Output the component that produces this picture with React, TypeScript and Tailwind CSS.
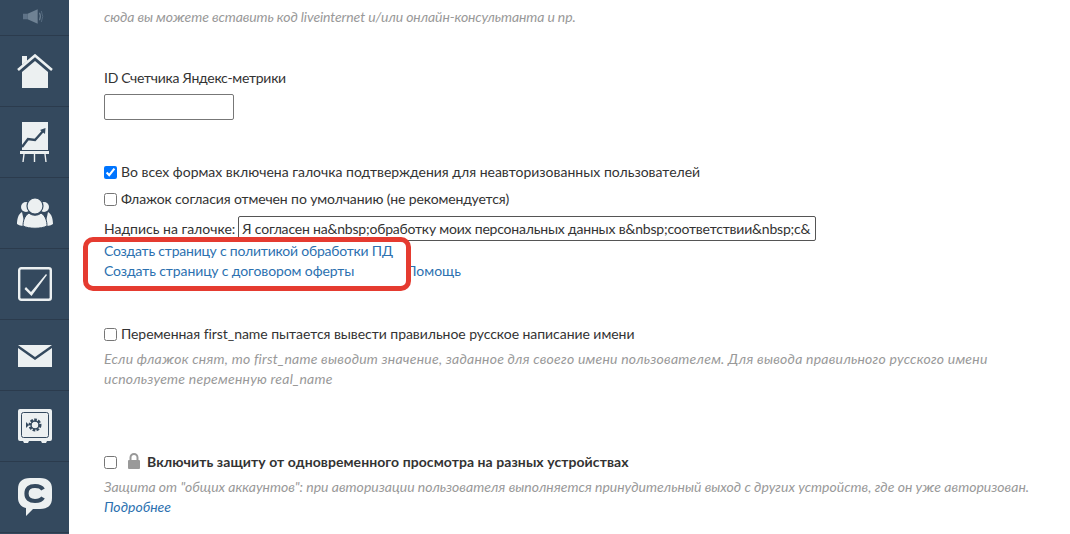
import React from 'react';

const link = 'text-[#2c71b0]';

const NavRow: React.FC<{ children: React.ReactNode; short?: boolean }> = ({ children, short }) => (
  <div className={`flex items-center justify-center border-b border-[#2b3b4d] ${short ? 'h-[36px]' : 'h-[71px]'}`}>
    {children}
  </div>
);

const Sidebar: React.FC = () => (
  <div className="w-[69px] shrink-0 h-[534px] overflow-hidden bg-[#34495e]">
    <NavRow short>
      <svg width="22" height="15" viewBox="0 0 24 16" className="mt-[-3px] ml-[-1px]">
        <rect x="0" y="5" width="5" height="6" fill="#5f7388" />
        <path d="M5 5 L16 0 V16 L5 11 Z" fill="#6f8294" />
        <path d="M18 4 Q20 8 18 12" stroke="#6f8294" strokeWidth="1.2" fill="none" />
        <path d="M20 2 Q23 8 20 14" stroke="#566b80" strokeWidth="1" fill="none" />
      </svg>
    </NavRow>
    <NavRow>
      <svg width="36" height="34" viewBox="0 0 36 34" className="mt-[-1px]">
        <path d="M5 2 H10 V7 L5 11 Z" fill="#ecf0f1" />
        <path d="M1 16 L18 1.5 L35 16" stroke="#ecf0f1" strokeWidth="2.6" fill="none" />
        <path d="M5 18 L18 7 L31 18 V34 H5 Z" fill="#ecf0f1" />
      </svg>
    </NavRow>
    <NavRow>
      <svg width="30" height="40" viewBox="0 0 30 40">
        <rect x="2" y="0" width="26" height="28" fill="#ecf0f1" />
        <path d="M2 25 L8 17 L15 18 L24 8" stroke="#34495e" strokeWidth="2.4" fill="none" />
        <path d="M20 8 L25.5 6 L25 12 Z" fill="#34495e" />
        <rect x="0" y="29" width="29" height="3" fill="#ecf0f1" />
        <path d="M4 32 L3 40 M14.5 32 V40 M25 32 L26 40" stroke="#ecf0f1" strokeWidth="1.4" />
      </svg>
    </NavRow>
    <NavRow>
      <svg width="36" height="31" viewBox="0 0 36 31">
        <circle cx="9" cy="9" r="5" fill="#ecf0f1" />
        <circle cx="27" cy="9" r="5" fill="#ecf0f1" />
        <path d="M5 14 C1 16 0 22 0 26 C3 28 6 28 8 28 Z M31 14 C35 16 36 22 36 26 C33 28 30 28 28 28 Z" fill="#ecf0f1" />
        <circle cx="18" cy="8" r="8" fill="#ecf0f1" stroke="#34495e" strokeWidth="1.2" />
        <path d="M12 15 C7 18 6 24 6 28 C12 31 24 31 30 28 C30 24 29 18 24 15 C21 18 15 18 12 15 Z" fill="#ecf0f1" stroke="#34495e" strokeWidth="1" />
      </svg>
    </NavRow>
    <NavRow>
      <svg width="34" height="34" viewBox="0 0 34 34">
        <rect x="1.2" y="1.2" width="31.6" height="31.6" rx="2" fill="none" stroke="#ecf0f1" strokeWidth="2.4" />
        <path d="M8 20 L13 25 L28 7 L29 8 L13.5 29 L6.5 22 Z" fill="#ecf0f1" />
      </svg>
    </NavRow>
    <NavRow>
      <svg width="34" height="22" viewBox="0 0 34 22" className="mt-[2px]">
        <path d="M0 0 H34 L17 12 Z" fill="#ecf0f1" />
        <path d="M0 3 L17 15 L34 3 V22 H0 Z" fill="#ecf0f1" />
      </svg>
    </NavRow>
    <NavRow>
      <svg width="34" height="34" viewBox="0 0 34 34">
        <path d="M2 0 H32 Q34 0 34 2 V30 Q34 32 32 32 H29 L28 34 H24 L23 32 H11 L10 34 H6 L5 32 H2 Q0 32 0 30 V2 Q0 0 2 0 Z" fill="#ecf0f1" />
        <rect x="3.5" y="3.5" width="27" height="25" rx="2" fill="none" stroke="#34495e" strokeWidth="1" />
        <circle cx="17" cy="16" r="5" fill="none" stroke="#34495e" strokeWidth="3" strokeDasharray="2.5 1.2" />
        <circle cx="17" cy="16" r="4" fill="none" stroke="#34495e" strokeWidth="1.4" />
        <path d="M8 13 L11 16 L8 19 Z" fill="#34495e" />
      </svg>
    </NavRow>
    <NavRow>
      <svg width="34" height="38" viewBox="0 0 34 38" className="mt-[-1px]">
        <path d="M12 0 H22 C30 0 34 4 34 11 V20 C34 27 30 31 22 31 H15 L8 38 L8 30 C3 29 0 25 0 20 V11 C0 4 4 0 12 0 Z" fill="#ecf0f1" />
        <path d="M25 11.5 C23.5 9 21 8 17 8 C11.5 8 8.5 10.5 8.5 15.5 C8.5 20.5 11.5 23 17 23 C21 23 23.5 22 25 19.5" fill="none" stroke="#34495e" strokeWidth="4.2" />
      </svg>
    </NavRow>
  </div>
);

const App: React.FC = () => {
  return (
    <div className="relative flex h-[534px] w-[1070px] overflow-hidden bg-white font-['Lato','Liberation_Sans',sans-serif] text-[14px] text-[#333]">
      <Sidebar />

      <div className="pl-[35px] pt-[7px] leading-[20px] flex-1">
        <p className="italic tracking-[-0.11px] text-[#999]">сюда вы можете вставить код liveinternet и/или онлайн-консультанта и пр.</p>

        <p className="mt-[41px] tracking-[-0.27px]">ID Счетчика Яндекс-метрики</p>
        <input type="text" className="mt-[6px] block h-[26px] w-[130px] rounded-[2px] border border-[#777] bg-white" />

        <label className="mt-[42px] flex items-center gap-[4px]">
          <input type="checkbox" defaultChecked className="m-0 h-[13px] w-[13px] accent-[#0075ff]" />
          <span>Во всех формах включена галочка подтверждения для неавторизованных пользователей</span>
        </label>
        <label className="mt-[7px] flex items-center gap-[4px]">
          <input type="checkbox" className="m-0 h-[13px] w-[13px]" />
          <span className="tracking-[-0.11px]">Флажок согласия отмечен по умолчанию (не рекомендуется)</span>
        </label>
        <div className="mt-[7px] flex items-center gap-[3px]">
          <span>Надпись на галочке:</span>
          <input
            type="text"
            readOnly
            value={'Я согласен на&nbsp;обработку моих персональных данных в&nbsp;соответствии&nbsp;с&'}
            className="h-[25px] w-[578px] rounded-[2px] border border-[#555] px-[3px] text-[14px] tracking-[-0.2px] text-[#333]"
          />
        </div>
        <p className={`tracking-[-0.21px] ${link}`}>Создать страницу с политикой обработки ПД</p>
        <div className="flex">
          <p className={`tracking-[-0.1px] ${link}`}>Создать страницу с договором оферты</p>
          <p className={`ml-[52px] ${link}`}>Помощь</p>
        </div>

        <label className="mt-[43px] flex items-center gap-[4px]">
          <input type="checkbox" className="m-0 h-[13px] w-[13px]" />
          <span className="tracking-[-0.05px]">Переменная first_name пытается вывести правильное русское написание имени</span>
        </label>
        <p className="mt-[5px] w-[930px] italic tracking-[0.22px] text-[#999]">
          Если флажок снят, то first_name выводит значение, заданное для своего имени пользователем. Для вывода правильного русского имени используете переменную real_name
        </p>

        <div className="mt-[63px] flex items-center">
          <input type="checkbox" className="m-0 h-[13px] w-[13px]" />
          <svg width="14" height="16" viewBox="0 0 14 16" className="ml-[10px] mt-[-2px]">
            <path d="M3.5 7 V4.5 A3.5 3.5 0 0 1 10.5 4.5 V7" fill="none" stroke="#999" strokeWidth="2" />
            <rect x="1" y="7" width="12" height="9" rx="1" fill="#999" />
          </svg>
          <b className="ml-[6px] font-bold tracking-[0.07px]">Включить защиту от одновременного просмотра на разных устройствах</b>
        </div>
        <p className="mt-[5px] italic text-[#999]">
          Защита от "общих аккаунтов": при авторизации пользователя выполняется принудительный выход с других устройств, где он уже авторизован.
        </p>
        <p className={`italic ${link}`}>Подробнее</p>
      </div>

      <div className="absolute left-[83px] top-[237px] h-[54px] w-[328px] rounded-[10px] border-[5px] border-[#e53b30]" />
    </div>
  );
};

export default App;
